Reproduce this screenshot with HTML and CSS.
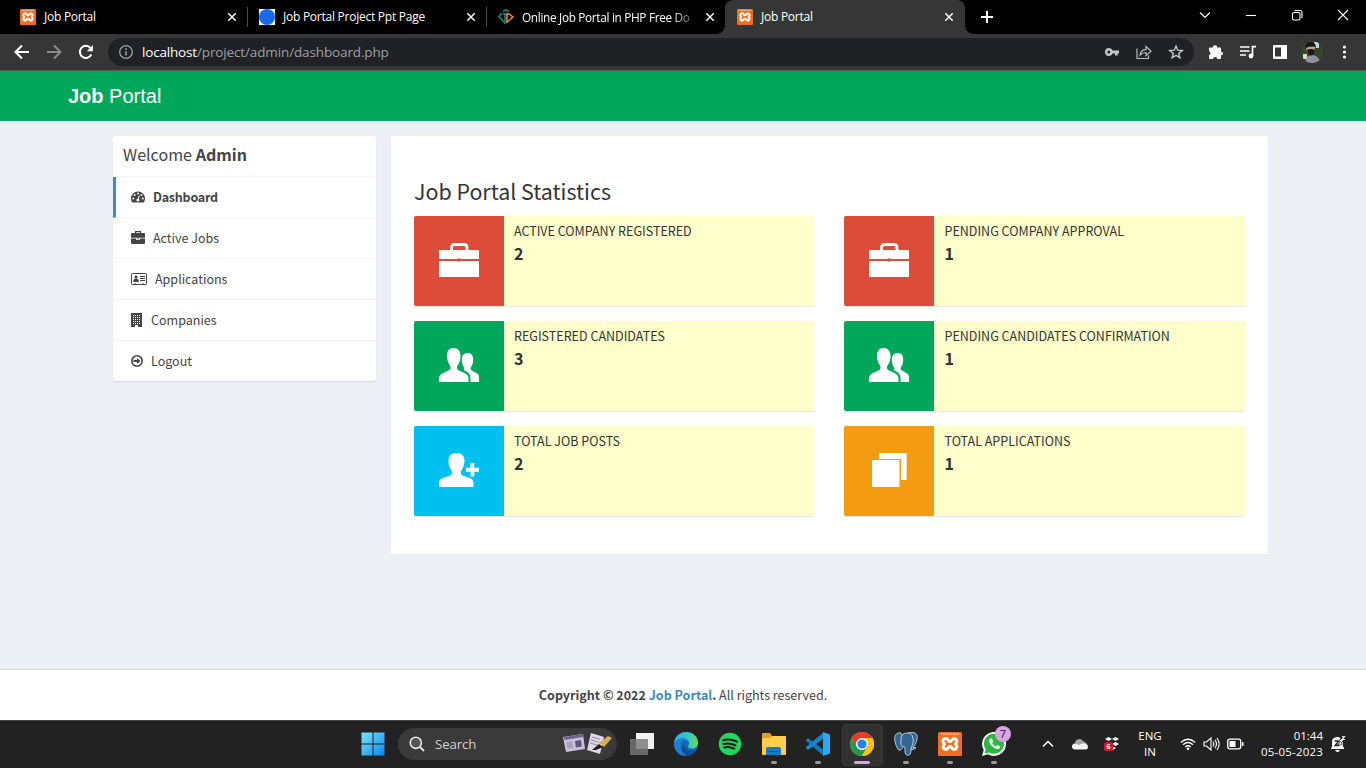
FILE: index.html
```html
<!DOCTYPE html>
<html lang="en">
<head>
<meta charset="utf-8">
<title>Job Portal</title>
<link rel="stylesheet" href="styles.css">
</head>
<body>
<svg class="defs" aria-hidden="true">
  <defs>
    <symbol id="xampp" viewBox="0 0 24 24">
      <rect width="24" height="24" rx="1.5" fill="#ee6f1f"/><path d="M3 2h18" stroke="#f9b98c" stroke-width="1.4"/>
      <path d="M7.5 6.5a2.6 2.6 0 0 0-1.2 4.9v1.2a2.6 2.6 0 1 0 3.9 3l1.8-1.4 1.8 1.4a2.6 2.6 0 1 0 3.9-3v-1.200a2.6 2.6 0 1 0-3.900-3L12 9.800l-1.800-1.400a2.6 2.6 0 0 0-2.700-1.900z" fill="none" stroke="#fff" stroke-width="3" stroke-linejoin="round"/>
      <path d="M9.500 12h5" stroke="#ee6f1f" stroke-width="1.500"/>
    </symbol>
    <symbol id="close" viewBox="0 0 8 8"><path d="M.3.3l7.400 7.400M7.700.3L.3 7.700" stroke="#fff" stroke-width="1.500"/></symbol>
    <symbol id="case-lg" viewBox="0 0 40 34">
      <path d="M12.500 8V4.500q0-3 3-3h9.500q3 0 3 3V8" fill="none" stroke="#fff" stroke-width="2.800"/>
      <path d="M0 7h40v9H0zM0 18h40v16H0z" fill="#fff"/><circle cx="20" cy="17" r="1.800" fill="#dd4b39"/>
    </symbol>
    <symbol id="people" viewBox="0 0 40 34">
      <path d="M14.500 0C19 0 21.500 3 21.500 8c0 3.500-1 7-3 9.500-1 1.500-.5 4 1 4.800l6 2.700c3 1.500 4 3 4 6v3H0v-3c0-3 1-4.500 4-6l6-2.700c1.500-.8 2-3.300 1-4.800-2-2.500-3-6-3-9.500 0-5 2-8 6.500-8z" fill="#fff"/>
      <path d="M28.500 5c3.800 0 5.700 2.500 5.700 6.500 0 3.500-1 6-2.200 7.500-.8 1.200-.4 2.800.8 3.500l3.800 2c2.400 1.200 3.400 2.500 3.400 5V34h-8.500v-3.500c0-4-1.700-6-5-7.500l-2-1c.8-.7 1-2 .3-3-1.300-1.500-2-4.500-2-7.500 0-4 2-6.500 5.700-6.500z" fill="#fff"/>
    </symbol>
  </defs>
</svg>

<div class="tabs">
  <div class="tab sep"><svg class="fav"><use href="#xampp"/></svg><span class="ttl">Job Portal</span><svg class="x"><use href="#close"/></svg></div>
  <div class="tab sep"><svg class="fav" viewBox="0 0 16 16"><path fill="#fff" d="M0 0h16v16H0z"/><circle cx="8" cy="8" r="8" fill="#0d6efd"/><path d="M5.500 5q3-2.500 5 0 1 2.500-2.500 3.500v3H6v-5h2.500" fill="none" stroke="#3f5fae"/></svg><span class="ttl">Job Portal Project Ppt Page</span><svg class="x"><use href="#close"/></svg></div>
  <div class="tab"><svg class="fav" viewBox="0 0 16 16" fill="none" stroke-width="1.500"><path d="M5 2.500 8 .8l3 1.700M4 4 .8 7.500 6 13M5 5h4M7 5v10" stroke="#138a8a"/><path d="M9 14V5h2l4 3-5 4.500" stroke="#ee9420"/></svg><span class="ttl fade">Online Job Portal in PHP Free Do</span><svg class="x"><use href="#close"/></svg></div>
  <div class="tab active"><svg class="fav"><use href="#xampp"/></svg><span class="ttl">Job Portal</span><svg class="x"><use href="#close"/></svg></div>
  <svg class="plus" viewBox="0 0 12 12"><path d="M6 0v12M0 6h12" stroke="#fff" stroke-width="2"/></svg>
  <div class="win">
    <svg viewBox="0 0 12 12"><path d="M1 3.500l5 5 5-5" /></svg>
    <svg viewBox="0 0 12 12"><path d="M1 6.500h10"/></svg>
    <svg viewBox="0 0 12 12"><rect x="1.500" y="3.500" width="7.500" height="7.500" rx="1.500"/><path d="M3.500 1.500H9q2 0 2 2V9"/></svg>
    <svg viewBox="0 0 12 12"><path d="M1 1l10 10M11 1L1 11"/></svg>
  </div>
</div>

<div class="toolbar">
  <svg class="nav" viewBox="0 0 16 16"><path d="M15 8H2M8 1.500L1.500 8 8 14.500" fill="none" stroke="#fff" stroke-width="2"/></svg>
  <svg class="nav" viewBox="0 0 16 16"><path d="M1 8h13M8 1.500L14.500 8 8 14.500" fill="none" stroke="#8b8b8b" stroke-width="2"/></svg>
  <svg class="nav" viewBox="0 0 16 16"><path d="M13.300 10.500a6 6 0 1 1-.8-6.500" fill="none" stroke="#fff" stroke-width="2"/><path d="M15 1v6.200H8.800z" fill="#fff"/></svg>
  <div class="omni">
    <svg class="info" viewBox="0 0 14 14"><circle cx="7" cy="7" r="6.300" fill="none" stroke="#9aa0a6" stroke-width="1.300"/><path d="M7 6.200v4.300M7 3.300v1.600" stroke="#9aa0a6" stroke-width="1.600"/></svg>
    <span class="url"><b>localhost</b><span>/project/admin/dashboard.php</span></span>
    <svg class="oi" viewBox="0 0 16 16"><path d="M8.600 6.500a4 4 0 1 0 0 3H11v2h2.700v-2H15v-3zM4.800 9.500a1.500 1.500 0 1 1 0-3 1.500 1.500 0 0 1 0 3z" fill="#c4c6c9"/></svg>
    <svg class="oi" viewBox="0 0 16 16"><path d="M1 4.500v10h11.500V11.500M4 11c.5-3.500 2.500-5.300 6-5.300V2.500l5 4.700-5 4.500V8.500c-3 0-4.500.8-6 2.500z" fill="none" stroke="#b9bbbe" stroke-width="1.200"/></svg>
    <svg class="oi" viewBox="0 0 16 16"><path d="M8 2l1.700 4.200 4.500.3-3.500 2.900 1.200 4.400L8 11.400l-3.900 2.400 1.200-4.400-3.500-2.900 4.500-.3z" fill="none" stroke="#c4c6c9" stroke-width="1.400"/></svg>
  </div>
  <div class="ext">
    <svg viewBox="0 0 16 16"><path d="M1 4.500q0-1 1-1h3.200a1.900 1.900 0 1 1 3.700 0H12q1 0 1 1v3a1.900 1.900 0 1 1 0 3.800V14q0 1-1 1H9.200a2 2 0 0 0-4 0H2q-1 0-1-1v-2.800a2 2 0 0 0 0-3.900z" fill="#fff"/></svg>
    <svg viewBox="0 0 16 16"><path d="M0 3h9.500M0 7h9.500M0 11h6M12.500 12V2.700H16" stroke="#fff" stroke-width="1.700" fill="none"/><circle cx="11" cy="12" r="2.400" fill="#fff"/></svg>
    <svg viewBox="0 0 16 16"><path d="M1 1h14v14H1zM3 3.500v9h6v-9z" fill="#fff" fill-rule="evenodd"/></svg>
    <svg class="avatar" viewBox="0 0 22 22"><clipPath id="av"><circle cx="11" cy="11" r="11"/></clipPath><g clip-path="url(#av)"><path fill="#35452b" d="M0 0h22v22H0z"/><path fill="#bcd3e5" d="M13 1h5v6h-5z"/><path fill="#d6dfb9" d="M2 13h4v5H2z"/><path d="M4 22q1-8 7-8t9 8z" fill="#8f9099"/><ellipse cx="9.500" cy="8" rx="4.200" ry="5.500" fill="#c49a7c"/><path d="M4.500 7Q4 1 9.500 1t5.500 6l-2-1.500-5 .3zM6 9q4-2 7.500 0 0 5-3.500 5.500Q6.500 14 6 9z" fill="#15151a"/></g></svg>
    <svg viewBox="0 0 16 16" fill="#fff"><circle cx="8.500" cy="3" r="1.600"/><circle cx="8.500" cy="8" r="1.600"/><circle cx="8.500" cy="13" r="1.600"/></svg>
  </div>
</div>

<header class="brandbar"><span class="brand"><b>Job</b> Portal</span></header>

<main class="page">
  <aside class="side">
    <h4 class="welcome">Welcome <b>Admin</b></h4>
    <a class="item on"><svg width="14" height="14" viewBox="0 0 14 14"><path d="M7 1.500a7 7 0 0 0-7 7q0 2 1 3.500.2.500.8.500h10.400q.6 0 .8-.5 1-1.500 1-3.500a7 7 0 0 0-7-7z" fill="#444"/><g fill="#fff"><circle cx="2.200" cy="8.500" r="1"/><circle cx="3.600" cy="5" r="1"/><circle cx="7" cy="3.600" r="1"/><circle cx="10.400" cy="5" r="1"/><circle cx="11.800" cy="8.500" r="1"/></g><path d="M8.300 5.500L7 10" stroke="#fff"/><circle cx="6.900" cy="10" r="1.500" fill="#fff"/></svg><span>Dashboard</span></a>
    <a class="item"><svg width="14" height="14" viewBox="0 0 14 14"><path d="M4.500 2.500V.7h5v1.800" fill="none" stroke="#444" stroke-width="1.200"/><path d="M1 2h12q1 0 1 1v3.700H0V3q0-1 1-1zM0 7.500h5.200V9h3.600V7.500H14V12q0 1-1 1H1q-1 0-1-1zM6 7.500h2v.7H6z" fill="#444"/></svg><span>Active Jobs</span></a>
    <a class="item"><svg width="16" height="14" viewBox="0 0 16 14"><rect x=".5" y="1.500" width="15" height="11" rx=".8" fill="none" stroke="#444"/><circle cx="5" cy="5" r="1.600" fill="#444"/><path d="M2.300 10V8.500q0-1.500 2.700-2 2.700.5 2.700 2V10z" fill="#444"/><path d="M9 4.500h5M9 6.500h5M9 8.500h5M3 12h2M11 12h2" stroke="#444"/></svg><span>Applications</span></a>
    <a class="item"><svg width="12" height="14" viewBox="0 0 12 14"><path d="M0 0h11v14H7v-2H4v2H0z" fill="#444"/><path d="M2 2.500h7.500M2 4.500h7.500M2 6.500h7.500M2 8.500h7.500M2 10.500h7.500" stroke="#fff" stroke-dasharray="1 1"/></svg><span>Companies</span></a>
    <a class="item"><svg width="12" height="14" viewBox="0 0 12 14"><circle cx="6" cy="7" r="5.200" fill="none" stroke="#444" stroke-width="1.600"/><path d="M2.500 6H6V4l3.500 3L6 10V8H2.500z" fill="#444"/></svg><span>Logout</span></a>
  </aside>
  <section class="content">
    <h3 class="heading">Job Portal Statistics</h3>
    <div class="grid">
      <div class="box"><div class="ic red"><svg><use href="#case-lg"/></svg></div><div class="bt"><div class="lab">ACTIVE COMPANY REGISTERED</div><div class="num">2</div></div></div>
      <div class="box"><div class="ic red"><svg><use href="#case-lg"/></svg></div><div class="bt"><div class="lab">PENDING COMPANY APPROVAL</div><div class="num">1</div></div></div>
      <div class="box"><div class="ic green"><svg><use href="#people"/></svg></div><div class="bt"><div class="lab">REGISTERED CANDIDATES</div><div class="num">3</div></div></div>
      <div class="box"><div class="ic green"><svg><use href="#people"/></svg></div><div class="bt"><div class="lab">PENDING CANDIDATES CONFIRMATION</div><div class="num">1</div></div></div>
      <div class="box"><div class="ic aqua"><svg viewBox="0 0 40 34"><path d="M17.500 0C23 0 25.500 3 25.500 8c0 4-1.300 7-3.200 9.500-1 1.500-.5 4 1 5l6.200 2c4 1.500 5 3 5 6.500v3H0v-3c0-3.500 1-5 5-6.500l6.500-2c1.500-1 2-3.500 1-5C10.500 15 9.500 12 9.500 8c0-5 2.500-8 8-8zM31.500 10h3.800v4.800H40v4h-4.700v4.700h-3.800v-4.700H27v-4h4.500z" fill="#fff"/></svg></div><div class="bt"><div class="lab">TOTAL JOB POSTS</div><div class="num">2</div></div></div>
      <div class="box"><div class="ic yellow"><svg viewBox="0 0 40 34"><path d="M10 0h27.700v27H32V6H10zM3 7h27.500v27H3z" fill="#fff"/></svg></div><div class="bt"><div class="lab">TOTAL APPLICATIONS</div><div class="num">1</div></div></div>
    </div>
  </section>
</main>
<footer class="foot"><b>Copyright © 2022 <a>Job Portal</a>.</b> All rights reserved.</footer>

<div class="task">
  <div class="cell start"><svg width="24" height="24" viewBox="0 0 24 24"><defs><linearGradient id="wg" gradientUnits="userSpaceOnUse" x1="0" y1="0" x2="24" y2="24"><stop offset="0" stop-color="#7ae6fb"/><stop offset="1" stop-color="#0a84f0"/></linearGradient></defs><path d="M.5.500h11v11H.5zM12.500.500h11v11h-11zM.5 12.500h11v11H.5zM12.500 12.500h11v11h-11z" fill="url(#wg)"/></svg></div>
  <div class="search">
    <svg width="16" height="16" viewBox="0 0 16 16"><circle cx="6.800" cy="6.800" r="5.600" fill="#555" stroke="#e6e6e6" stroke-width="1.600"/><path d="M11 11l4 4" stroke="#e6e6e6" stroke-width="1.800"/></svg>
    <span class="sq">Search</span>
    <svg width="50" height="22" viewBox="0 0 50 22"><path d="M1 4l20-3 2 15-19 3z" fill="#c9c3dc"/><path d="M2 4l19-3 .4 3L2.500 7z" fill="#6d6689"/><path d="M4.500 9l6-.8.8 7-5.800.8z" fill="#a9a3c2"/><path d="M13 8l6-1 .8 6.500-6 1z" fill="#5c5780"/><path d="M29 0l13 4-4 17-13-4z" fill="#ddd7e8"/><path d="M30 4l8 2.300M29 7l8 2.300M28 10l8 2.300" stroke="#918ba8"/><path d="M30 17l7-6 4 3-7 3z" fill="#1d1b22"/><path d="M37 10l9-7 4 2-8 9z" fill="#d9ad55"/></svg>
  </div>
  <div class="apps">
    <div class="cell"><svg width="24" height="24" viewBox="0 0 24 24"><path d="M6 1h18v16H6z" fill="#f0f0f0"/><path d="M0 7h18v16H0z" fill="#777" opacity=".82"/></svg></div>
    <div class="cell"><svg width="24" height="24" viewBox="0 0 24 24"><defs><linearGradient id="eg"><stop offset="0" stop-color="#27a9e8"/><stop offset=".6" stop-color="#37c6c5"/><stop offset="1" stop-color="#67dc57"/></linearGradient></defs><circle cx="12" cy="12" r="12" fill="#1468b8"/><path d="M0 11C1 4 6 0 12 0c7 0 12 5 12 10.500 0 4-3 6-6 6-2.500 0-4-.8-4-2 0-.8 1-1 1-3 0-2.500-2.500-5-6-5-4 0-7 2-9 4.500z" fill="url(#eg)"/><path d="M8 9c-3 5-.5 12 5 14.900C5 24.500 0 18 0 12c1-3 5-5.500 9-5.500 3 0 5 1.500 6 3.500-2-1.500-5.500-2-7-1z" fill="#1b7fd6"/><path d="M10.500 12c-.5 4 4 8 10.500 6.300l1.500-.3c-2 3.500-5.500 6-10 6-5-3-6.500-10-2-12z" fill="#124e93"/></svg></div>
    <div class="cell"><svg width="24" height="24" viewBox="0 0 24 24"><circle cx="12" cy="12" r="11.200" fill="#1ed760"/><path d="M5 8.300q7-2 14 1.400M5.500 12q6-1.600 12 1.400M6.200 15.500q5-1.300 10 1.200" fill="none" stroke="#191414" stroke-width="2" stroke-linecap="round"/></svg></div>
    <div class="cell run"><svg width="24" height="24" viewBox="0 0 24 24"><path d="M0 2q0-1 1-1h7l2 3H23q1 0 1 1v18H0z" fill="#e2a21a"/><path d="M0 6h8l2-2h13q1 0 1 1v17.500H0z" fill="#ffd04c"/><path d="M4 23v-6q0-2 2-2h11q2 0 2 2v6z" fill="#1878ca"/><path d="M7 19h9v1H7z" fill="#0b4f94"/></svg></div>
    <div class="cell run"><svg width="24" height="24" viewBox="0 0 24 24"><path d="M0 8l2-2 16 12v6L0 9z" fill="#0f78be"/><path d="M0 16l2 2L18 6V0L0 15z" fill="#1688d3"/><path d="M17 0l7 2.500v19L17 24z" fill="#2baaf2"/></svg></div>
    <div class="cell run now"><svg width="24" height="24" viewBox="0 0 24 24"><circle cx="12" cy="12" r="12" fill="#fbc116"/><path d="M1.600 6A12 12 0 0 1 22.400 6H12L6.800 15z" fill="#e33b2e"/><path d="M1.600 6A12 12 0 0 0 12 24l5.200-9H6.800z" fill="#229a4b"/><path d="M12 6h10.400A12 12 0 0 1 12 24l5.200-9z" fill="#fbc116"/><circle cx="12" cy="12" r="6" fill="#fff"/><circle cx="12" cy="12" r="4.600" fill="#2a7de9"/></svg></div>
    <div class="cell run"><svg width="24" height="24" viewBox="0 0 24 24" fill="#336791" stroke="#c8d3dc" stroke-width=".9"><path d="M7 1C3 0 .5 3 .7 7c.3 4 2 9 4 11 2 1 3-1 4-2.500L10 8z"/><path d="M14 1c4-1.500 9-.5 9.300 3.500.2 4-2 8-4.300 11l3 .3q-2 2-5 1.700L15 10z"/><path d="M7 6q1-5 6-5t6 5q1 4-1 8-1.500 2-1 5 0 4-3 4.300-3 .3-3-4.300l-.2-4Q6 15 7 10z"/></svg></div>
    <div class="cell run"><svg width="24" height="24"><use href="#xampp"/></svg></div>
    <div class="cell run"><svg width="24" height="24" viewBox="0 0 24 24"><path d="M0 24l1.700-6A12 12 0 1 1 6 22.300z" fill="#fff"/><path d="M2.500 21.500l1.200-4A10 10 0 1 1 7 20.500z" fill="#2cb742"/><path d="M8.500 6.500c-2 1-2 3.500.5 6.500s6 5 8.300 3.500c1.200-1 .8-2 0-2.400l-2-1-1.500 1.400c-1.800-.7-3-2-3.700-3.500l1-1.500-1-2.500q-.6-1-1.600-.5z" fill="#fff"/></svg><span class="badge">7</span></div>
  </div>
  <div class="tray">
    <svg class="chev" width="12" height="12" viewBox="0 0 12 12"><path d="M1 8.500l5-5 5 5" fill="none" stroke="#fff" stroke-width="1.500"/></svg>
    <svg class="cloud" width="16" height="12" viewBox="0 0 16 12"><path d="M3 6a4.500 4.500 0 0 1 8.500-2.500Q15 4 15.500 8L8 10z" fill="#a5a5a5"/><path d="M3 11.500q-3-.3-3-3t3-3q2 0 4 1.500Q9 5 12 5.500q4 .500 4 3.500 0 2.500-3 2.500z" fill="#f4f4f4"/></svg>
    <span class="drop"><svg width="16" height="16" viewBox="0 0 16 16" fill="#fff"><path d="M1 3l3.500-2L8 3 4.500 5zM8 3l3.500-2L15 3l-3.500 2zM8 8l3.500-2L15 8l-3.500 2zM5 12l3-2 4 2-3 2z"/></svg><b>6</b></span>
    <div class="lang"><span>ENG</span><span>IN</span></div>
    <svg class="sys" width="16" height="16" viewBox="0 0 16 16" fill="none" stroke="#fff" stroke-width="1.200"><path d="M.8 6.500q7.200-6.500 14.400 0M3 8.800q5-4.600 10 0M5.200 11q2.800-2.500 5.600 0"/><circle cx="8" cy="12.800" r="1.300" fill="#fff" stroke="none"/></svg>
    <svg class="sys" width="17" height="16" viewBox="0 0 17 16" fill="none" stroke="#fff" stroke-width="1.100"><path d="M1 6h2.500L8 2v12l-4.500-4H1zM10 5.500q1.800 2.500 0 5M12 3.800q3 4.200 0 8.400M14 2q4.300 6 0 12"/></svg>
    <svg class="sys" width="17" height="16" viewBox="0 0 17 16"><rect x=".7" y="3.200" width="13" height="9.600" rx="2" fill="none" stroke="#fff" stroke-width="1.300"/><path d="M2.500 5h6v6h-6zM15 6h1.500v4H15z" fill="#fff"/></svg>
    <div class="clock"><span>01:44</span><span class="date">05-05-2023</span></div>
    <svg class="bell" width="16" height="16" viewBox="0 0 16 16"><path d="M2 11V6q0-4.500 5-5h2l4 5v4.500l1 1.500v1H1v-1zM5 14h5q-1 2-2.500 2T5 14z" fill="#fff"/><path d="M4.500 5h4.300L5 9.500h4.300" fill="none" stroke="#222" stroke-width="1.300"/><path d="M9.500 4.500H12L9.500 8h3M12 .7h2.500L12 3.500h3" fill="none" stroke="#222" stroke-width="2.600"/><path d="M9.500 4.500H12L9.500 8h3M12 .7h2.500L12 3.500h3" fill="none" stroke="#fff" stroke-width="1.100"/></svg>
  </div>
</div>
</body>
</html>
```
FILE: styles.css
```css
* { box-sizing: border-box; }
body { margin: 0; width: 1366px; height: 768px; overflow: hidden; display: flex; flex-direction: column; background: #ecf0f5; color: #333; font-family: "Noto Sans CJK SC", "Noto Sans", sans-serif; font-size: 12.53px; line-height: 20px; }
svg { display: block; flex: none; }
h3, h4 { margin: 0; font-weight: 400; }
.defs { position: absolute; width: 0; height: 0; }

.tabs { height: 34px; flex: none; background: #000; display: flex; align-items: center; padding-left: 8px; font-family: "Open Sans", "Noto Sans", sans-serif; font-size: 12px; letter-spacing: -.25px; color: #fff; }
.tab { width: 239px; height: 34px; display: flex; align-items: center; padding: 0 11px 0 12px; position: relative; }
.tab.sep::after { content: ""; position: absolute; right: -1px; top: 7px; width: 1px; height: 20px; background: #4a4a4a; }
.tab.active { width: 240px; padding-right: 12px; background: #363636; border-radius: 8px 8px 0 0; }
.tab.active::before, .tab.active::after { content: ""; position: absolute; bottom: 0; width: 8px; height: 8px; }
.tab.active::before { left: -8px; background: radial-gradient(circle at 0 0, transparent 7.5px, #363636 8px); }
.tab.active::after { right: -8px; background: radial-gradient(circle at 100% 0, transparent 7.5px, #363636 8px); }
.fav { width: 16px; height: 16px; margin-right: 8px; }
.ttl { white-space: nowrap; margin-right: auto; }
.fade { font-size: 11.8px; letter-spacing: -.32px; -webkit-mask-image: linear-gradient(90deg, #000 150px, transparent 178px); mask-image: linear-gradient(90deg, #000 150px, transparent 178px); }
.x { width: 8px; height: 8px; }
.plus { width: 12px; height: 12px; margin-left: 16px; }
.win { margin-left: auto; display: flex; gap: 34px; padding: 0 17px 5px 0; }
.win svg { width: 12px; height: 12px; fill: none; stroke: #fff; stroke-width: 1.1; }

.toolbar { height: 37px; flex: none; background: #363636; border-bottom: 1px solid #5c5c5c; display: flex; align-items: center; padding-left: 14px; }
.nav { width: 16px; height: 16px; margin-right: 16px; }
.omni { width: 1086px; height: 28px; margin-left: -2px; border-radius: 14px; background: #202124; display: flex; align-items: center; padding: 0 10px 0 11px; }
.info { width: 14px; height: 14px; margin-right: 9px; }
.url { flex: 1; font-family: "Open Sans", "Noto Sans", sans-serif; font-size: 13.5px; letter-spacing: -.13px; color: #9aa0a6; white-space: nowrap; }
.url b { font-weight: 400; color: #fff; letter-spacing: -.18px; }
.oi { width: 16px; height: 16px; margin-left: 16px; }
.ext { display: flex; align-items: center; gap: 16px; margin-left: 14px; }
.ext svg { width: 16px; height: 16px; }
.ext .avatar { width: 22px; height: 22px; margin: 0 -3px; }

.brandbar { height: 50px; flex: none; background: #00a65a; padding-left: 68px; line-height: 50px; font-family: "Liberation Sans", Arial, sans-serif; font-size: 20px; color: #fff; }

.page { flex: 1; display: flex; align-items: flex-start; padding: 15px 98px 0 113px; gap: 15px; }
.side { width: 263px; background: #fff; border-radius: 3px; box-shadow: 0 1px 1px rgba(0,0,0,.1); color: #444; }
.welcome { height: 41px; padding: 8px 10px 0; font-size: 16.1px; line-height: 20px; border-bottom: 1px solid #f4f4f4; }
.item { height: 41px; display: flex; align-items: center; padding-left: 15px; border-left: 3px solid transparent; border-bottom: 1px solid #f4f4f4; }
.item:last-child { height: 40px; border-bottom: 0; }
.item svg { margin-right: 8px; }
.on { border-left-color: #3c8dbc; font-weight: 700; letter-spacing: -.24px; }
.content { flex: 1; background: #fff; height: 418px; padding: 42px 23px 0; }
.heading { font-size: 21.4px; line-height: 26px; margin-bottom: 12px; }
.grid { display: grid; grid-template-columns: 400px 401px; gap: 15px 30px; }
.box { height: 90px; display: flex; background: #ffc; border-radius: 2px; box-shadow: 0 1px 1px rgba(0,0,0,.1); overflow: hidden; }
.ic { width: 90px; display: flex; align-items: center; justify-content: center; padding-bottom: 2px; }
.ic svg { width: 40px; height: 34px; }
.red { background: #dd4b39; }
.green { background: #00a65a; }
.aqua { background: #00c0ef; }
.yellow { background: #f39c12; }
.bt { padding: 5px 10px; }
.box:nth-child(even) .bt { padding-left: 10.5px; }
.lab { white-space: nowrap; }
.num { font-size: 16.1px; font-weight: 700; line-height: 24px; }

.foot { height: 51px; flex: none; background: #fff; border-top: 1px solid #d2d6de; text-align: center; line-height: 50px; color: #444; }
.foot a { color: #3c8dbc; }

.task { height: 48px; flex: none; background: #222; border-top: 1px solid #484848; display: flex; align-items: center; padding: 0 20px 1px 351px; color: #fff; font-family: "Open Sans", "Noto Sans", sans-serif; }
.cell { width: 44px; height: 40px; display: flex; align-items: center; justify-content: center; position: relative; }
.search { width: 219px; height: 32px; margin: 0 3px 0 3px; border-radius: 16px; background: #3a3a3a; display: flex; align-items: center; padding: 0 5px 0 11px; font-size: 13.2px; letter-spacing: -.1px; color: #d0d0d0; }
.sq { margin: 0 auto 0 10px; }
.apps { display: flex; }
.run::after { content: ""; position: absolute; left: 19px; bottom: 0; width: 6px; height: 3px; border-radius: 2px; background: #9a9a9a; }
.now::before { content: ""; position: absolute; left: 2px; top: 0; width: 38px; height: 40px; border-radius: 4px; background: #313131; border: 1px solid #3a3a3a; box-shadow: 3px 0 0 -1px #2c2c2c; }
.now svg { position: relative; }
.now::after { left: 14px; width: 16px; background: #d9a2e0; }
.badge { position: absolute; left: 23px; top: 2px; width: 16px; height: 16px; border-radius: 8px; background: #dba3e6; color: #222; font-size: 11px; line-height: 16px; text-align: center; }
.tray { flex: 1; display: flex; align-items: center; font-size: 11.5px; line-height: 16px; }
.chev { margin-left: 26px; }
.cloud { margin-left: 18px; }
.drop { margin-left: 16px; position: relative; }
.drop b { position: absolute; left: 0; top: 6px; width: 9px; height: 9px; border-radius: 2px; background: #d9152c; font-size: 7px; line-height: 9px; text-align: center; }
.lang { width: 36px; margin: 0 12px 0 12px; display: flex; flex-direction: column; align-items: center; }
.sys { margin-right: 7px; }
.clock { margin-left: auto; display: flex; flex-direction: column; align-items: flex-end; }
.date { letter-spacing: .2px; }
.bell { margin-left: 7px; }
```
